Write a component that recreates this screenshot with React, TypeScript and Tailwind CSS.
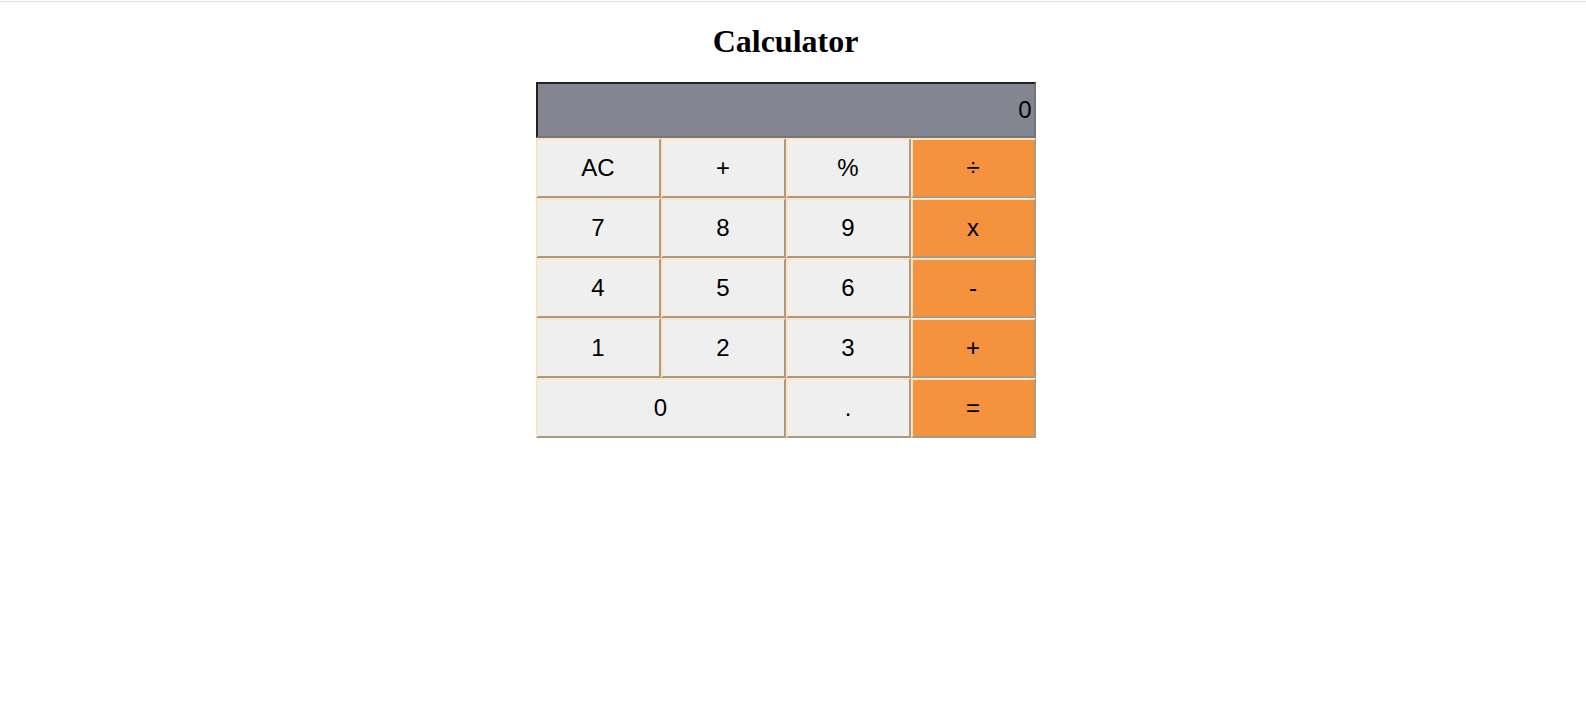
import React from 'react';

type Key = { label: string; orange?: boolean; wide?: boolean };

const keys: Key[] = [
  { label: 'AC' },
  { label: '+' },
  { label: '%' },
  { label: '÷', orange: true },
  { label: '7' },
  { label: '8' },
  { label: '9' },
  { label: 'x', orange: true },
  { label: '4' },
  { label: '5' },
  { label: '6' },
  { label: '-', orange: true },
  { label: '1' },
  { label: '2' },
  { label: '3' },
  { label: '+', orange: true },
  { label: '0', wide: true },
  { label: '.' },
  { label: '=', orange: true },
];

const CalcKey: React.FC<{ k: Key }> = ({ k }) => (
  <button
    className={`h-[60px] border-2 [border-style:outset] border-[#ffe4c4] text-[24px] text-black font-['Liberation_Sans',Arial,sans-serif] ${
      k.orange ? 'bg-[#f5923e]' : 'bg-[#efefef]'
    } ${k.wide ? 'col-span-2' : ''}`}
  >
    {k.label}
  </button>
);

export default function App() {
  return (
    <div className="min-h-screen bg-white">
      <div className="mt-px h-px bg-[#dedede]" />
      <div className="w-[1571px] flex flex-col items-center">
        <h1 className="mt-[21px] mb-[22px] text-[32px] leading-[37px] font-bold text-black font-['Liberation_Serif','Times_New_Roman',serif]">
          Calculator
        </h1>
        <div className="w-[500px]">
          <div className="h-[56px] border-2 border-t-[#222222] border-l-[#222222] border-b-[#767676] border-r-[#767676] bg-[#838590] flex items-center justify-end pr-[2px] text-[24px] text-black font-['Liberation_Sans',Arial,sans-serif]">
            0
          </div>
          <div className="grid grid-cols-4">
            {keys.map((k, i) => (
              <CalcKey key={i} k={k} />
            ))}
          </div>
        </div>
      </div>
    </div>
  );
}
